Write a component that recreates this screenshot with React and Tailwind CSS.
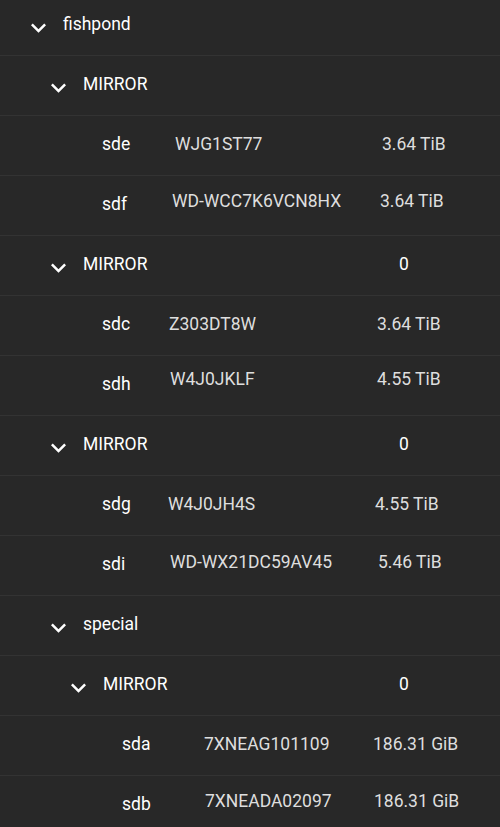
import React from "react";

function Chevron() {
  return (
    <svg width="15" height="10" viewBox="6 8.2 12 8" fill="currentColor" className="mt-[7px] text-white">
      <path d="M16.59 8.59L12 13.17 7.41 8.59 6 10l6 6 6-6z" />
    </svg>
  );
}

const rows = [
  { type: "group", pl: "pl-[31px]", label: "fishpond" },
  { type: "vdev", pl: "pl-[51px]", label: "MIRROR", labelW: "w-[316px]", errors: "" },
  { type: "disk", pl: "pl-[102px]", name: "sde", nameW: "w-[73px]", serial: "WJG1ST77", serialW: "w-[207px]", size: "3.64 TiB", shift: "" },
  { type: "disk", pl: "pl-[102px]", name: "sdf", nameW: "w-[70px]", serial: "WD-WCC7K6VCN8HX", serialW: "w-[208px]", size: "3.64 TiB", shift: "mb-[7px]" },
  { type: "vdev", pl: "pl-[51px]", label: "MIRROR", labelW: "w-[316px]", errors: "0" },
  { type: "disk", pl: "pl-[102px]", name: "sdc", nameW: "w-[67px]", serial: "Z303DT8W", serialW: "w-[208px]", size: "3.64 TiB", shift: "" },
  { type: "disk", pl: "pl-[102px]", name: "sdh", nameW: "w-[68px]", serial: "W4J0JKLF", serialW: "w-[207px]", size: "4.55 TiB", shift: "mb-[10px]" },
  { type: "vdev", pl: "pl-[51px]", label: "MIRROR", labelW: "w-[316px]", errors: "0" },
  { type: "disk", pl: "pl-[102px]", name: "sdg", nameW: "w-[66px]", serial: "W4J0JH4S", serialW: "w-[207px]", size: "4.55 TiB", shift: "" },
  { type: "disk", pl: "pl-[102px]", name: "sdi", nameW: "w-[68px]", serial: "WD-WX21DC59AV45", serialW: "w-[208px]", size: "5.46 TiB", shift: "mb-[5px]" },
  { type: "group", pl: "pl-[51px]", label: "special" },
  { type: "vdev", pl: "pl-[71px]", label: "MIRROR", labelW: "w-[296px]", errors: "0" },
  { type: "disk", pl: "pl-[122px]", name: "sda", nameW: "w-[82px]", serial: "7XNEAG101109", serialW: "w-[169px]", size: "186.31 GiB", shift: "" },
  { type: "disk", pl: "pl-[122px]", name: "sdb", nameW: "w-[83px]", serial: "7XNEADA02097", serialW: "w-[169px]", size: "186.31 GiB", shift: "mb-[7px]" },
];

function Row({ row }) {
  if (row.type === "disk") {
    return (
      <div className={`flex h-[60px] items-center border-b border-[#333333] pb-[2px] ${row.pl}`}>
        <span className={`shrink-0 text-white ${row.nameW}`}>{row.name}</span>
        <div className={`flex items-center text-[#dedede] ${row.shift}`}>
          <span className={`shrink-0 ${row.serialW}`}>{row.serial}</span>
          <span>{row.size}</span>
        </div>
      </div>
    );
  }
  return (
    <div className={`flex h-[60px] items-center border-b border-[#333333] pb-[2px] ${row.pl}`}>
      <div className="flex w-[32px] shrink-0 items-start">
        <Chevron />
      </div>
      <span className={`shrink-0 text-white ${row.labelW || ""}`}>{row.label}</span>
      {row.errors && <span className="text-white">{row.errors}</span>}
    </div>
  );
}

export default function App() {
  return (
    <div className="h-[827px] w-[500px] overflow-hidden bg-[#282828] font-['Roboto',sans-serif] text-[17.5px]">
      <div className="-mt-[4px]">
        {rows.map((row, i) => (
          <Row key={i} row={row} />
        ))}
      </div>
    </div>
  );
}
